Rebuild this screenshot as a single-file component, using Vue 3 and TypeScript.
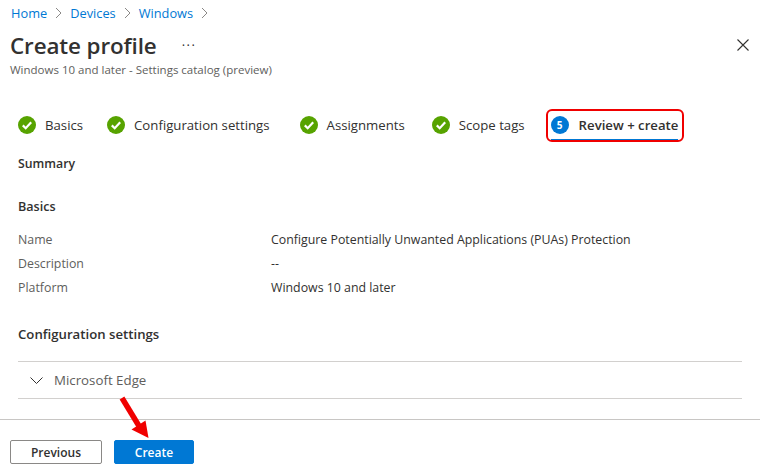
<script setup lang="ts">
const crumbs = ['Home', 'Devices', 'Windows']
const steps = ['Basics', 'Configuration settings', 'Assignments', 'Scope tags']
const rows = [
  { k: 'Name', v: 'Configure Potentially Unwanted Applications (PUAs) Protection' },
  { k: 'Description', v: '--' },
  { k: 'Platform', v: 'Windows 10 and later' },
]
</script>

<template>
  <div class="page">
    <nav class="crumbs">
      <template v-for="c in crumbs" :key="c">
        <a class="crumb">{{ c }}</a>
        <svg class="sep" width="7" height="12" viewBox="0 0 7 12"><path d="M1 1l5 5-5 5" fill="none" stroke="#8a8886" stroke-width="1" /></svg>
      </template>
    </nav>
    <header class="head">
      <div class="title-row">
        <h1>Create profile</h1>
        <span class="more">···</span>
      </div>
      <svg class="close" width="12" height="12" viewBox="0 0 12 12"><path d="M.5.5l11 11M11.5.5l-11 11" stroke="#323130" stroke-width="1.1" fill="none" /></svg>
    </header>
    <p class="sub">Windows 10 and later - Settings catalog (preview)</p>

    <div class="steps">
      <div v-for="s in steps" :key="s" class="step">
        <svg width="18" height="18" viewBox="0 0 18 18"><circle cx="9" cy="9" r="9" fill="#57a300" /><path d="M4.8 9.4l2.9 2.8 5.5-6" fill="none" stroke="#fff" stroke-width="2.2" /></svg>
        <span>{{ s }}</span>
      </div>
      <div class="step current">
        <span class="num">5</span>
        <span class="cur-label">Review + create</span>
      </div>
    </div>

    <main class="content">
      <h2 class="summary">Summary</h2>
      <h2 class="basics">Basics</h2>
      <div class="rows">
        <div v-for="r in rows" :key="r.k" class="row">
          <span class="key">{{ r.k }}</span>
          <span class="val">{{ r.v }}</span>
        </div>
      </div>
      <h2 class="config">Configuration settings</h2>
      <div class="accordion">
        <svg width="13" height="7" viewBox="0 0 13 7"><path d="M.5.5l6 6 6-6" fill="none" stroke="#323130" stroke-width="1" /></svg>
        <span>Microsoft Edge</span>
      </div>
    </main>

    <footer class="foot">
      <button class="btn prev">Previous</button>
      <button class="btn create">Create</button>
    </footer>
    <svg class="arrow" width="34" height="46" viewBox="0 0 34 46"><path d="M5 3l17 28" stroke="#f00000" stroke-width="5.5" fill="none" /><path d="M14.5 34.5L28.5 25.5L31.5 43z" fill="#f00000" /></svg>
  </div>
</template>

<style>
html, body { margin: 0; background: #fff; }
</style>

<style scoped>
.page {
  position: relative;
  width: 760px;
  height: 475px;
  overflow: hidden;
  background: #fff;
  font-family: "Open Sans", "Noto Sans", sans-serif;
  font-size: 12.35px;
  color: #323130;
}
.crumbs {
  display: flex;
  align-items: center;
  height: 16px;
  padding: 5px 0 0 11px;
  gap: 8px;
}
.crumb { color: #0078d4; font-size: 12.8px; }
.head {
  display: flex;
  justify-content: space-between;
  align-items: center;
  margin-top: 8px;
  padding: 0 11px 0 10px;
  height: 32px;
}
.title-row { display: flex; align-items: center; gap: 25px; }
h1 { margin: 0; font-size: 22.4px; font-weight: 600; letter-spacing: -0.1px; color: #323130; }
.more { font-size: 13px; letter-spacing: 1.5px; color: #323130; }
.sub { margin: 1px 0 0; padding-left: 10px; font-size: 11.5px; line-height: 15px; color: #605e5c; }
.steps {
  display: flex;
  align-items: center;
  margin-top: 36px;
  padding-left: 18px;
  height: 24px;
}
.step { display: flex; align-items: center; gap: 9px; font-size: 13.2px; white-space: nowrap; }
.step:nth-child(1) { margin-right: 24px; }
.step:nth-child(2) { margin-right: 30px; }
.step:nth-child(3) { margin-right: 27px; }
.step:nth-child(4) { margin-right: 26px; }
.step.current { position: relative; gap: 10px; }
.step.current::before {
  content: "";
  position: absolute;
  left: 0;
  right: 0;
  bottom: -7px;
  height: 2px;
  background: #0078d4;
}
.step.current::after {
  content: "";
  position: absolute;
  left: -5px;
  right: -6px;
  top: -7px;
  bottom: -8px;
  border: 2px solid #f00000;
  border-radius: 6px;
}
.num {
  width: 18px;
  height: 18px;
  border-radius: 50%;
  background: #0078d4;
  color: #fff;
  font-size: 10px;
  font-weight: 700;
  display: flex;
  align-items: center;
  justify-content: center;
}
.cur-label { font-weight: 600; }
.content { padding: 0 18px; }
h2 { margin: 0; font-size: 12.3px; font-weight: 600; line-height: 16px; }
.summary { margin-top: 19px; }
.basics { margin-top: 27px; font-size: 12.6px; }
.rows { margin-top: 12px; }
.row { display: flex; height: 24px; align-items: center; }
.key { width: 253px; color: #605e5c; }
.config { margin-top: 27px; font-size: 13.2px; }
.accordion {
  display: flex;
  align-items: center;
  gap: 11px;
  height: 36px;
  margin-top: 19px;
  padding-left: 12px;
  border-top: 1px solid #d2d0ce;
  border-bottom: 1px solid #d2d0ce;
  color: #605e5c;
  font-size: 13.3px;
}
.foot {
  position: absolute;
  left: 0;
  right: 0;
  bottom: 0;
  height: 56px;
  border-top: 1px solid #c8c6c4;
  display: flex;
  align-items: center;
  gap: 12px;
  padding: 9px 0 0 10px;
  box-sizing: border-box;
}
.btn {
  height: 24px;
  border-radius: 2px;
  font-family: inherit;
  font-size: 12px;
  font-weight: 600;
  padding: 0;
}
.prev { width: 92px; background: #fff; border: 1px solid #8a8886; color: #323130; }
.create { width: 80px; background: #0078d4; border: 1px solid #0078d4; color: #fff; }
.arrow { position: absolute; left: 117px; top: 395px; }
</style>
